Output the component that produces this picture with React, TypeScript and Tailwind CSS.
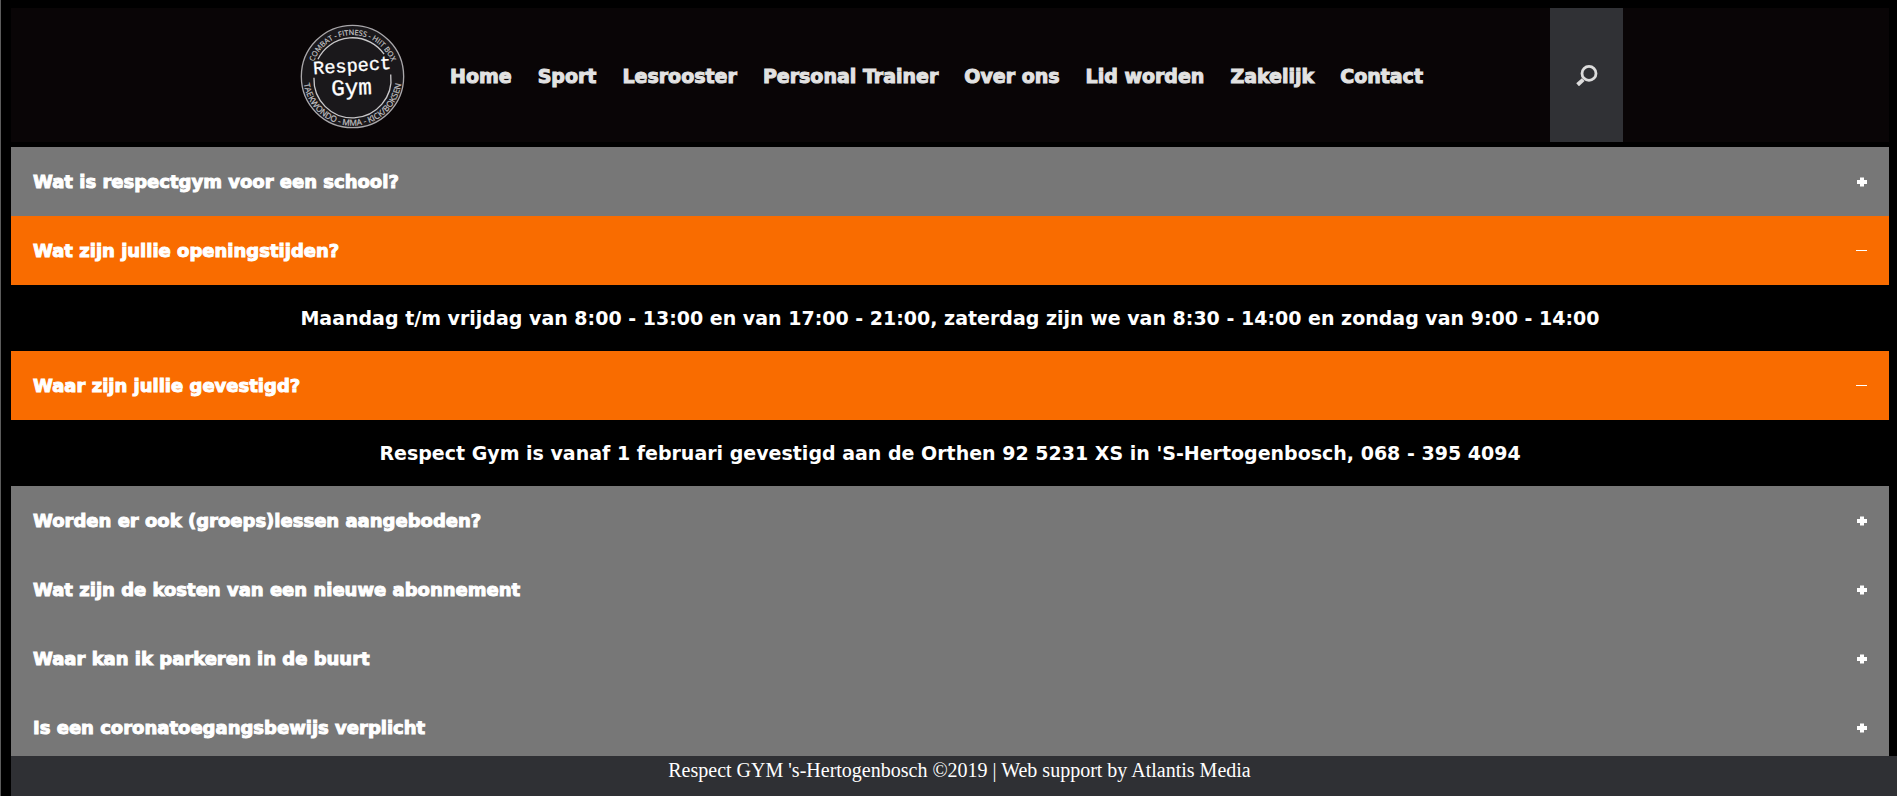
import { useState } from "react";

const links = ["Home", "Sport", "Lesrooster", "Personal Trainer", "Over ons", "Lid worden", "Zakelijk", "Contact"];

const questions = [
  { title: "Wat is respectgym voor een school?", answer: "Respect Gym is een sportschool in 's-Hertogenbosch.", open: false },
  {
    title: "Wat zijn jullie openingstijden?",
    answer:
      "Maandag t/m vrijdag van 8:00 - 13:00 en van 17:00 - 21:00, zaterdag zijn we van 8:30 - 14:00 en zondag van 9:00 - 14:00",
    open: true,
  },
  {
    title: "Waar zijn jullie gevestigd?",
    answer: "Respect Gym is vanaf 1 februari gevestigd aan de Orthen 92 5231 XS in 'S-Hertogenbosch, 068 - 395 4094",
    open: true,
  },
  { title: "Worden er ook (groeps)lessen aangeboden?", answer: "Ja, bekijk het lesrooster.", open: false },
  { title: "Wat zijn de kosten van een nieuwe abonnement", answer: "Neem contact met ons op.", open: false },
  { title: "Waar kan ik parkeren in de buurt", answer: "Neem contact met ons op.", open: false },
  { title: "Is een coronatoegangsbewijs verplicht", answer: "Neem contact met ons op.", open: false },
];

function Logo() {
  return (
    <svg viewBox="0 0 316 316" className="block size-[105px]" role="img" aria-label="Respect Gym">
      <defs>
        <path id="arc-top" d="M 33 158 A 125 125 0 0 1 283 158" />
        <path id="arc-bottom" d="M 14 124 A 148 148 0 1 0 302 124" />
      </defs>
      <circle cx="158" cy="158" r="154" fill="#1a181b" stroke="#a9a7aa" strokeWidth="4" />
      <g fill="none" stroke="#c9c8ca" strokeWidth="4">
        <path d="M 54 106 A 116 116 0 0 1 253 91" />
        <path d="M 42 162 A 116 116 0 1 0 273 152" />
      </g>
      <g fill="#c4c3c5" stroke="#c4c3c5" strokeWidth="0.6" fontFamily="'Open Sans', 'Noto Sans', sans-serif" textAnchor="middle">
        <text fontSize="22">
          <textPath href="#arc-top" startOffset="50%">COMBAT - FITNESS - HIIT BOX</textPath>
        </text>
        <text fontSize="25">
          <textPath href="#arc-bottom" startOffset="50%">TAEKWONDO - MMA - KICK/BOKSEN</textPath>
        </text>
      </g>
      <g fill="#fff" stroke="#fff" strokeWidth="1" fontFamily="'Liberation Mono', monospace" textAnchor="middle">
        <text x="158" y="143" fontSize="56" transform="rotate(-4 158 143)">Respect</text>
        <text x="156" y="213" fontSize="68" transform="rotate(-2 156 213)">Gym</text>
      </g>
    </svg>
  );
}

function Header() {
  return (
    <header className="bg-[#090506]">
      <div className="mx-auto flex h-[134px] max-w-[1346px] items-center pl-[23px]">
        <a href="#home" className="shrink-0 pt-[2px]">
          <Logo />
        </a>
        <nav className="ml-[45px] flex gap-[26px] pt-[2px] text-[19px] leading-6 font-bold whitespace-nowrap text-[#e2e2e2] [-webkit-text-stroke:1px_#e2e2e2]">
          {links.map((l) => (
            <a key={l} href={"#" + l.toLowerCase().replace(" ", "-")}>
              {l}
            </a>
          ))}
        </nav>
        <button
          type="button"
          aria-label="Zoeken"
          className="ml-auto flex w-[73px] shrink-0 items-center justify-center self-stretch bg-[#303135]"
        >
          <svg viewBox="0 0 22 22" className="size-[22px]" fill="none" stroke="#dcdcdc">
            <circle cx="13" cy="9.4" r="7" strokeWidth="2.8" />
            <path d="M7.2 15.6 1.6 20.8" strokeWidth="4" />
          </svg>
        </button>
      </div>
    </header>
  );
}

function Question({ title, answer, open: initial }: { title: string; answer: string; open: boolean }) {
  const [open, setOpen] = useState(initial);
  return (
    <section>
      <h2>
        <button
          type="button"
          aria-expanded={open}
          onClick={() => setOpen(!open)}
          className={
            "flex h-[69px] w-full items-center justify-between px-[22px] text-left text-[18px] font-bold [-webkit-text-stroke:1px_white] " +
            (open ? "bg-[#f96c00]" : "bg-[#777777]")
          }
        >
          <span>{title}</span>
          <svg viewBox="0 0 11 11" className="size-[11px] shrink-0" stroke="#fff" aria-hidden="true">
            {open ? <path d="M0 5.5H11" strokeWidth="1" /> : <path d="M1 6H11M6 1.5V10.5" strokeWidth="4" />}
          </svg>
        </button>
      </h2>
      {open && <p className="px-[22px] py-[18px] text-center text-[19px] leading-[30px] font-bold">{answer}</p>}
    </section>
  );
}

export default function App() {
  return (
    <div className="min-h-screen overflow-x-hidden border-l border-[#5c5c5c] bg-black pt-2 pr-2 pl-[10px] font-['DejaVu_Sans',sans-serif] text-white">
      <Header />
      <main className="mt-[5px]">
        {questions.map((q) => (
          <Question key={q.title} {...q} />
        ))}
      </main>
      <footer className="fixed bottom-0 left-[11px] h-10 w-full bg-[#2f3034] text-center font-['Liberation_Serif',serif] text-[20px] leading-7">
        Respect GYM 's-Hertogenbosch ©2019 | Web support by Atlantis Media
      </footer>
    </div>
  );
}
